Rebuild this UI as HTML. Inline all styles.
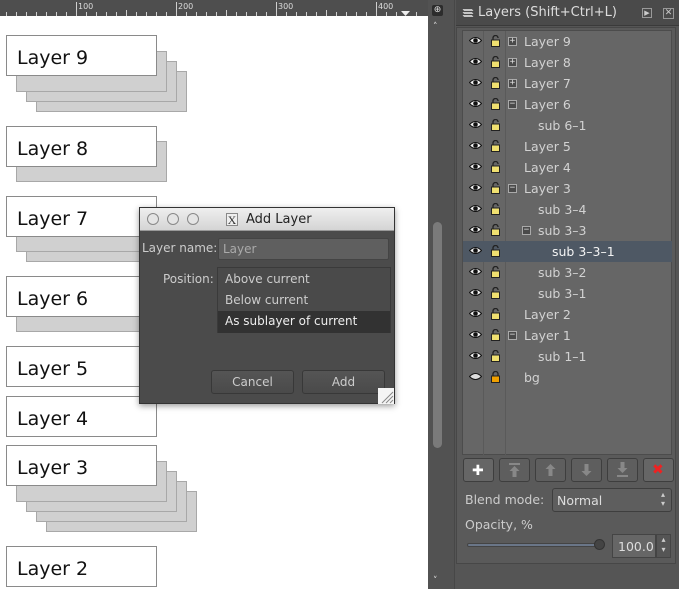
<!DOCTYPE html>
<html><head><style>
*{margin:0;padding:0;box-sizing:border-box}
body{width:679px;height:589px;background:#555;font-family:"DejaVu Sans","Liberation Sans",sans-serif;position:relative;overflow:hidden}
.a{position:absolute}
.box{position:absolute;width:151px;height:41px;background:#fff;border:1px solid #8a8a8a;font-size:19px;color:#111;padding:11px 0 0 10px}
.sh{position:absolute;width:151px;height:41px;background:#d0d0d0;border:1px solid #a8a8a8}
.row{position:absolute;left:462px;width:210px;height:21px;font-size:12.5px;color:#d2d2d2}
.row .t{position:absolute;top:3px}
.eye{position:absolute;left:7px;top:5px;width:13px;height:9px}
.lock{position:absolute;left:29px;top:4px}
.exp{position:absolute;top:6px;width:9px;height:9px;border:1px solid #aaa;background:#4a4a4a;color:#ddd;font-size:9px;line-height:7px;text-align:center;font-family:"DejaVu Sans Mono",monospace}
.btn{position:absolute;top:458px;width:31px;height:24px;border:1px solid #3e3e3e;border-radius:3px;background:#5e5e5e}
</style></head><body>
<div class="a" style="left:0;top:0;width:428px;height:16px;background:#4e4e4e"></div>
<svg class="a" style="left:0;top:0" width="428" height="16">
<g stroke="#cfcfcf" stroke-width="1">
<path d="M76.5 2V16M176.5 2V16M276.5 2V16M376.5 2V16"/>
<path d="M6.5 12V16M16.5 12V16M26.5 12V16M36.5 12V16M46.5 12V16M56.5 12V16M66.5 12V16M86.5 12V16M96.5 12V16M106.5 12V16M116.5 12V16M126.5 10V16M136.5 12V16M146.5 12V16M156.5 12V16M166.5 12V16M186.5 12V16M196.5 12V16M206.5 12V16M216.5 12V16M226.5 10V16M236.5 12V16M246.5 12V16M256.5 12V16M266.5 12V16M286.5 12V16M296.5 12V16M306.5 12V16M316.5 12V16M326.5 10V16M336.5 12V16M346.5 12V16M356.5 12V16M366.5 12V16M386.5 12V16M396.5 12V16M416.5 12V16"/>
</g>
<g fill="#ddd" font-size="8" font-family="DejaVu Sans"><text x="78" y="9">100</text><text x="178" y="9">200</text><text x="278" y="9">300</text><text x="378" y="9">400</text></g>
<path d="M401 11h9l-4.5 5z" fill="#eee"/>
</svg>
<div class="a" style="left:0;top:16px;width:428px;height:573px;background:#fff"></div>
<div class="a" style="left:428px;top:0;width:27px;height:589px;background:#525252;border-right:1px solid #474747"></div>
<div class="a" style="left:432px;top:5px;width:11px;height:11px;background:#2c2c2c;border-radius:2px;color:#ddd;font-size:9px;line-height:11px;text-align:center">⊕</div>
<div class="a" style="left:433px;top:22px;color:#ddd;font-size:9px">˄</div>
<div class="a" style="left:433px;top:576px;color:#ddd;font-size:9px">˅</div>
<div class="a" style="left:433px;top:222px;width:9px;height:226px;background:#7a7a7a;border-radius:5px"></div>
<div class="sh" style="left:36px;top:71px"></div><div class="sh" style="left:26px;top:61px"></div><div class="sh" style="left:16px;top:51px"></div>
<div class="box" style="left:6px;top:35px">Layer 9</div>
<div class="sh" style="left:16px;top:141px"></div>
<div class="box" style="left:6px;top:126px">Layer 8</div>
<div class="sh" style="left:26px;top:221px"></div><div class="sh" style="left:16px;top:211px"></div>
<div class="box" style="left:6px;top:196px">Layer 7</div>
<div class="sh" style="left:16px;top:291px"></div>
<div class="box" style="left:6px;top:276px">Layer 6</div>
<div class="box" style="left:6px;top:346px">Layer 5</div>
<div class="box" style="left:6px;top:396px">Layer 4</div>
<div class="sh" style="left:46px;top:491px"></div><div class="sh" style="left:36px;top:481px"></div><div class="sh" style="left:26px;top:471px"></div><div class="sh" style="left:16px;top:461px"></div>
<div class="box" style="left:6px;top:445px">Layer 3</div>
<div class="box" style="left:6px;top:546px">Layer 2</div>
<div class="a" style="left:139px;top:207px;width:256px;height:197px;background:#4b4b4b;border:1px solid #333;box-shadow:0 2px 6px rgba(0,0,0,.4)"></div>
<div class="a" style="left:140px;top:208px;width:254px;height:23px;background:linear-gradient(#efefef,#d4d4d4);border-bottom:1px solid #999"></div>
<div class="a" style="left:147px;top:213px;width:12px;height:12px;border:1px solid #888;border-radius:50%;background:#e4e4e4"></div>
<div class="a" style="left:167px;top:213px;width:12px;height:12px;border:1px solid #888;border-radius:50%;background:#e4e4e4"></div>
<div class="a" style="left:187px;top:213px;width:12px;height:12px;border:1px solid #888;border-radius:50%;background:#e4e4e4"></div>
<div class="a" style="left:226px;top:213px;width:12px;height:13px;border:1px solid #888;background:#eee;font-family:'Liberation Serif',serif;font-size:12px;line-height:12px;text-align:center;color:#333">X</div>
<div class="a" style="left:246px;top:212px;font-size:13px;color:#222">Add Layer</div>
<div class="a" style="left:142px;top:241px;font-size:12px;color:#ccc">Layer name:</div>
<div class="a" style="left:218px;top:238px;width:171px;height:22px;background:#5f5f5f;border:1px solid #444;border-radius:2px;font-size:12px;color:#aaa;padding:3px 0 0 4px">Layer</div>
<div class="a" style="left:163px;top:272px;font-size:12px;color:#ccc">Position:</div>
<div class="a" style="left:217px;top:267px;width:174px;height:66px;background:#4a4a4a;border:1px solid #3a3a3a"></div>
<div class="a" style="left:225px;top:272px;font-size:12px;color:#ccc">Above current</div>
<div class="a" style="left:225px;top:293px;font-size:12px;color:#ccc">Below current</div>
<div class="a" style="left:218px;top:311px;width:172px;height:22px;background:#323232"></div>
<div class="a" style="left:225px;top:314px;font-size:12px;color:#eee">As sublayer of current</div>
<div class="a" style="left:211px;top:370px;width:83px;height:24px;background:linear-gradient(#555,#4a4a4a);border:1px solid #383838;border-radius:3px;color:#ccc;font-size:12px;text-align:center;line-height:22px">Cancel</div>
<div class="a" style="left:302px;top:370px;width:83px;height:24px;background:linear-gradient(#555,#4a4a4a);border:1px solid #383838;border-radius:3px;color:#ccc;font-size:12px;text-align:center;line-height:22px">Add</div>
<svg class="a" style="left:378px;top:388px" width="16" height="16"><rect width="16" height="16" fill="#f4f4f4"/><path d="M4 15L15 4M8 15L15 8M12 15L15 12" stroke="#888"/></svg>
<div class="a" style="left:456px;top:0;width:223px;height:26px;background:#4a4a4a;border-bottom:1px solid #3a3a3a"></div>
<svg class="a" style="left:461px;top:7px" width="14" height="13"><g fill="#eee" stroke="#444" stroke-width=".5"><path d="M1 2h10l2 2H3z"/><path d="M1 5h10l2 2H3z"/><path d="M1 8h10l2 2H3z"/></g></svg>
<div class="a" style="left:478px;top:5px;font-size:13px;color:#ddd">Layers (Shift+Ctrl+L)</div>
<div class="a" style="left:642px;top:8px;width:10px;height:10px;border:1px solid #999;color:#ccc;font-size:7px;line-height:8px;text-align:center">▶</div>
<div class="a" style="left:663px;top:8px;width:11px;height:11px;border:1px solid #999;color:#ccc;font-size:9px;line-height:9px;text-align:center">✕</div>
<div class="a" style="left:456px;top:27px;width:220px;height:537px;border:1px solid #474747;background:#5a5a5a"></div>
<div class="a" style="left:462px;top:30px;width:210px;height:425px;background:#666;border:1px solid #4c4c4c"></div>
<div class="a" style="left:483px;top:31px;width:1px;height:424px;background:#5a5a5a"></div>
<div class="a" style="left:505px;top:31px;width:1px;height:424px;background:#5a5a5a"></div>
<div class="a" style="left:463px;top:241px;width:209px;height:21px;background:#4e5864"></div>
<div id="rows"></div>
<script>
var R=[["Layer 9",0,"+"],["Layer 8",0,"+"],["Layer 7",0,"+"],["Layer 6",0,"−"],["sub 6-1",1],["Layer 5",0],["Layer 4",0],["Layer 3",0,"−"],["sub 3-4",1],["sub 3-3",1,"−"],["sub 3-3-1",2],["sub 3-2",1],["sub 3-1",1],["Layer 2",0],["Layer 1",0,"−"],["sub 1-1",1],["bg",0]];
var h="";
R.forEach(function(r,i){var y=31+i*21;var bg=r[0]=="bg";
h+='<div class="row" style="top:'+y+'px">';
h+='<svg class="eye" viewBox="0 0 13 9"><path d="M0.5 4.5Q6.5 -1.5 12.5 4.5Q6.5 10.5 0.5 4.5z" fill="'+(bg?'#ddd':'#f0f0f0')+'" stroke="#111"/>'+(bg?'':'<circle cx="6.5" cy="4.5" r="2.3" fill="#111"/>')+'</svg>';
h+='<svg class="lock" width="9" height="12" viewBox="0 0 9 12">'+(bg?'<path d="M2 5V3a2.5 2.5 0 0 1 5 0v2" fill="none" stroke="#222" stroke-width="1.3"/><rect x="0.5" y="5" width="8" height="6.5" fill="#f0a000" stroke="#222"/>':'<path d="M2 5V3a2.5 2.5 0 0 1 5 0" fill="none" stroke="#222" stroke-width="1.3"/><rect x="0.5" y="5" width="8" height="6.5" fill="#f0e070" stroke="#222"/>')+'</svg>';
var tx=62+r[1]*14; if(r[1]==2)tx=90;
if(r[2])h+='<div class="exp" style="left:'+(46+r[1]*14)+'px">'+r[2]+'</div>';
h+='<span class="t" style="left:'+tx+'px;'+(r[1]==2?'color:#f4f4f4':'')+'">'+r[0].replace(/-/g,"–")+'</span></div>';});
document.getElementById("rows").innerHTML=h;
</script>
<div class="btn" style="left:463px;background:#666"></div>
<div class="a" style="left:472px;top:463px;color:#fff;font-size:14px;font-weight:bold">✚</div>
<div class="btn" style="left:499px"></div>
<div class="btn" style="left:535px"></div>
<div class="btn" style="left:571px"></div>
<div class="btn" style="left:607px"></div>
<svg class="a" style="left:499px;top:458px" width="140" height="24"><g fill="#888">
<rect x="10" y="5" width="11" height="2"/><path d="M15.5 8l-5 5h3v6h4v-6h3z"/>
<path d="M51.5 6l-5 5h3v7h4v-7h3z"/>
<path d="M87.5 18l-5-5h3V6h4v7h3z"/>
<rect x="118" y="17" width="11" height="2"/><path d="M123.5 15l-5-5h3V4h4v6h3z"/>
</g></svg>
<div class="btn" style="left:643px;background:#666"></div><div class="a" style="left:652px;top:462px;color:#e22;font-size:14px;font-weight:bold">✖</div>
<div class="a" style="left:465px;top:492px;font-size:12.5px;color:#ccc">Blend mode:</div>
<div class="a" style="left:552px;top:488px;width:120px;height:24px;background:#5e5e5e;border:1px solid #3e3e3e;border-radius:3px;font-size:12.5px;color:#ddd;padding:4px 0 0 4px">Normal</div>
<div class="a" style="left:661px;top:490px;color:#ccc;font-size:8px;line-height:9px">▴<br>▾</div>
<div class="a" style="left:465px;top:517px;font-size:12.5px;color:#ccc">Opacity, %</div>
<div class="a" style="left:467px;top:543px;width:136px;height:4px;background:#6a7688;border:1px solid #444;border-radius:2px"></div>
<div class="a" style="left:594px;top:539px;width:11px;height:11px;background:#444;border:1px solid #333;border-radius:50%"></div>
<div class="a" style="left:612px;top:534px;width:44px;height:24px;background:#666;border:1px solid #444;font-size:12.5px;color:#ddd;padding:4px 0 0 5px">100.0</div>
<div class="a" style="left:656px;top:534px;width:15px;height:24px;background:#555;border:1px solid #444;color:#ccc;font-size:8px;line-height:10px;text-align:center">▴<br>▾</div>
</body></html>
